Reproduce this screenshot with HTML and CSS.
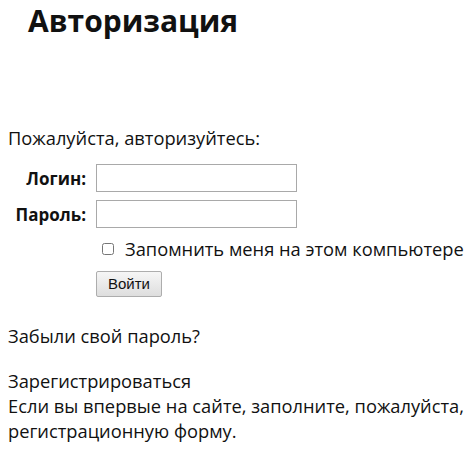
FILE: index.html
```html
<!DOCTYPE html>
<html lang="ru">
<head>
    <meta charset="UTF-8">
    <title>Авторизация</title>
    <link rel="stylesheet" href="styles.css">
</head>
<body>
    <h1 class="page-title">Авторизация</h1>

    <div class="auth-form">
        <p class="intro">Пожалуйста, авторизуйтесь:</p>
        <form class="login-grid" onsubmit="return false">
            <label class="field-label" for="login">Логин:</label>
            <input class="field-input" type="text" id="login">

            <label class="field-label" for="password">Пароль:</label>
            <input class="field-input" type="password" id="password">

            <div class="remember">
                <input type="checkbox" id="remember">
                <label for="remember">Запомнить меня на этом компьютере</label>
            </div>

            <div class="submit-row">
                <button class="submit-btn" type="submit">Войти</button>
            </div>
        </form>

        <p class="forgot">Забыли свой пароль?</p>

        <p class="register">
            Зарегистрироваться<br>
            Если вы впервые на сайте, заполните, пожалуйста, регистрационную форму.
        </p>
    </div>
</body>
</html>
```

FILE: styles.css
```css
body {
    margin: 0;
    padding: 0 8px;
    font-family: "Open Sans", sans-serif;
    font-size: 18.3px;
    line-height: 25px;
    color: #111;
    background: #fff;
}

.page-title {
    margin: 0 0 0 20px;
    font-size: 30px;
    line-height: 42px;
    font-weight: 700;
}

.intro {
    margin: 83px 0 14px;
}

.login-grid {
    display: grid;
    grid-template-columns: 78px auto;
    column-gap: 10px;
    row-gap: 8px;
    align-items: center;
}

.field-label {
    font-size: 17px;
    font-weight: 700;
    text-align: right;
}

.field-input {
    width: 201px;
    height: 28px;
    box-sizing: border-box;
    border: 1px solid #a9a9a9;
    margin: 0;
}

.remember {
    grid-column: 2;
    display: flex;
    align-items: center;
    gap: 11px;
    padding-left: 6px;
}

.remember input {
    margin: 0;
    width: 12px;
    height: 12px;
}

.submit-row {
    grid-column: 2;
}

.submit-btn {
    font-family: "Liberation Sans", Arial, sans-serif;
    font-size: 15px;
    width: 66px;
    height: 26px;
    padding: 0;
    border: 1px solid #adadad;
    border-radius: 2px;
    background: linear-gradient(#f6f6f6, #dedede);
    color: #111;
}

.forgot {
    margin: 26px 0 0;
}

.register {
    margin: 20px 0 0;
}
```
